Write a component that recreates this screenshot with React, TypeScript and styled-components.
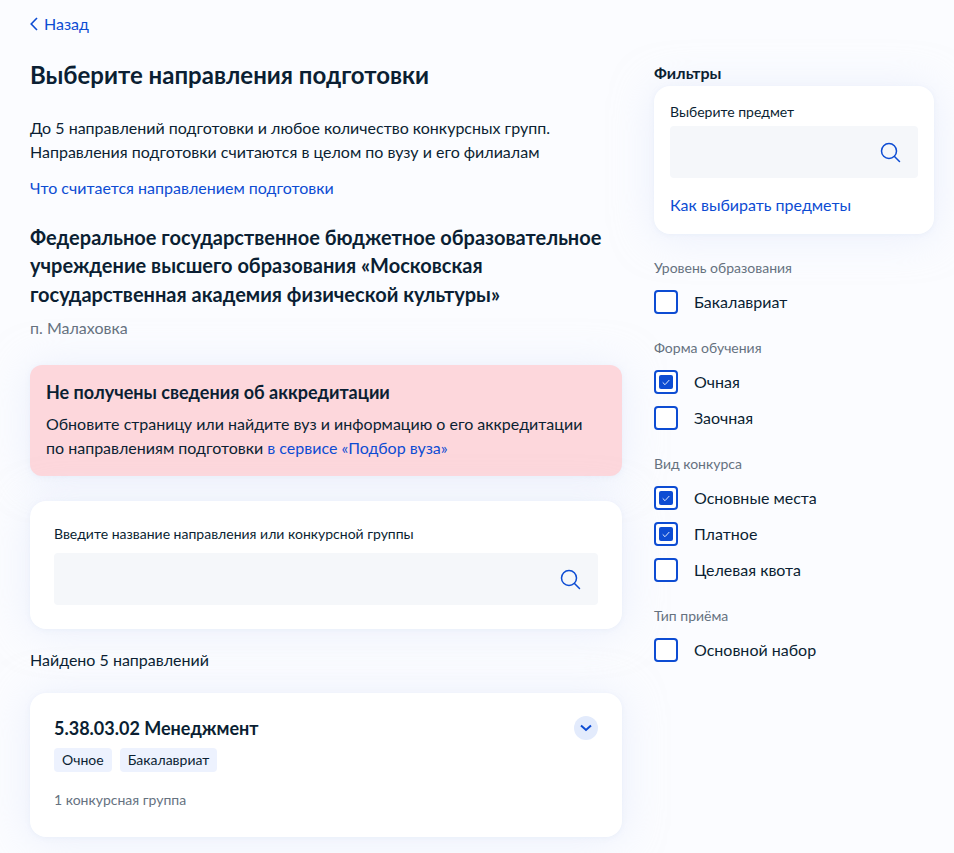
import styled, { createGlobalStyle } from 'styled-components';

const GlobalStyle = createGlobalStyle`
  * { box-sizing: border-box; }
  html, body { margin: 0; padding: 0; }
  body {
    background: #fbfcff;
    font-family: Lato, 'Noto Sans', sans-serif;
    color: #0b1f33;
  }
`;

const SearchIcon = () => (
  <svg width="24" height="24" viewBox="0 0 24 24" fill="none" stroke="#0d4cd3" strokeWidth="1.5">
    <circle cx="11" cy="11" r="7.5" />
    <path d="M16.5 16.5l5 5" strokeLinecap="round" />
  </svg>
);

const filters = [
  { title: 'Уровень образования', items: [{ label: 'Бакалавриат', on: false }] },
  {
    title: 'Форма обучения',
    items: [
      { label: 'Очная', on: true },
      { label: 'Заочная', on: false },
    ],
  },
  {
    title: 'Вид конкурса',
    items: [
      { label: 'Основные места', on: true },
      { label: 'Платное', on: true },
      { label: 'Целевая квота', on: false },
    ],
  },
  { title: 'Тип приёма', items: [{ label: 'Основной набор', on: false }] },
];

const App = () => {
  return (
    <Page>
      <GlobalStyle />
      <BackLink>
        <svg width="8" height="14" viewBox="0 0 8 14" fill="none" stroke="#0d4cd3" strokeWidth="1.6">
          <path d="M7 1L1.2 7L7 13" />
        </svg>
        Назад
      </BackLink>
      <Columns>
        <Main>
          <Title>Выберите направления подготовки</Title>
          <Intro>
            До 5 направлений подготовки и любое количество конкурсных групп.
            <br />
            Направления подготовки считаются в целом по вузу и его филиалам
          </Intro>
          <IntroLink>Что считается направлением подготовки</IntroLink>
          <OrgName>
            Федеральное государственное бюджетное образовательное учреждение высшего образования
            «Московская государственная академия физической культуры»
          </OrgName>
          <City>п. Малаховка</City>
          <Alert>
            <AlertTitle>Не получены сведения об аккредитации</AlertTitle>
            <AlertText>
              Обновите страницу или найдите вуз и информацию о его аккредитации
              <br />
              по направлениям подготовки <InlineLink>в сервисе «Подбор вуза»</InlineLink>
            </AlertText>
          </Alert>
          <SearchCard>
            <FieldLabel>Введите название направления или конкурсной группы</FieldLabel>
            <SearchField $gap={9}>
              <SearchIcon />
            </SearchField>
          </SearchCard>
          <Found>Найдено 5 направлений</Found>
          <ResultCard>
            <ResultHead>
              <ResultTitle>5.38.03.02 Менеджмент</ResultTitle>
              <Expand>
                <svg width="12" height="8" viewBox="0 0 12 8" fill="none" stroke="#0d4cd3" strokeWidth="2">
                  <path d="M1 1.5L6 6L11 1.5" />
                </svg>
              </Expand>
            </ResultHead>
            <Tags>
              <Tag>Очное</Tag>
              <Tag>Бакалавриат</Tag>
            </Tags>
            <ResultNote>1 конкурсная группа</ResultNote>
          </ResultCard>
        </Main>
        <Side>
          <SideTitle>Фильтры</SideTitle>
          <SubjectCard>
            <FieldLabel>Выберите предмет</FieldLabel>
            <SearchField $gap={4}>
              <SearchIcon />
            </SearchField>
            <SubjectLink>Как выбирать предметы</SubjectLink>
          </SubjectCard>
          {filters.map((group) => (
            <FilterGroup key={group.title}>
              <GroupTitle>{group.title}</GroupTitle>
              {group.items.map((item) => (
                <CheckRow key={item.label}>
                  <CheckBox>
                    {item.on && (
                      <CheckFill>
                        <svg width="8" height="7" viewBox="0 0 8 7" fill="none" stroke="#dfe8fb" strokeWidth="1">
                          <path d="M0.7 3.4l2.3 2.3L7.3 1" />
                        </svg>
                      </CheckFill>
                    )}
                  </CheckBox>
                  {item.label}
                </CheckRow>
              ))}
            </FilterGroup>
          ))}
        </Side>
      </Columns>
    </Page>
  );
};

const cardShadow = `
  box-shadow: 0 1px 4px rgba(225, 233, 247, 0.5), 0 2px 40px rgba(222, 230, 250, 0.5);
`;

const Page = styled.div`
  height: 853px;
  overflow: hidden;
  padding: 12px 20px 0 30px;
`;

const BackLink = styled.a`
  display: flex;
  align-items: center;
  gap: 6px;
  height: 24px;
  font-size: 16px;
  line-height: 24px;
  color: #0d4cd3;
`;

const Columns = styled.div`
  display: flex;
  gap: 32px;
  margin-top: 23px;
`;

const Main = styled.div`
  width: 592px;
  flex: none;
`;

const Side = styled.div`
  width: 280px;
  flex: none;
  padding-top: 2px;
`;

const Title = styled.h1`
  margin: 0;
  font-size: 24px;
  line-height: 32px;
  font-weight: 700;
`;

const Intro = styled.p`
  margin: 25px 0 0;
  font-size: 16px;
  line-height: 24px;
`;

const IntroLink = styled.a`
  display: block;
  margin-top: 12px;
  font-size: 16px;
  line-height: 24px;
  color: #0d4cd3;
`;

const OrgName = styled.h2`
  margin: 22.5px 0 0;
  font-size: 20px;
  line-height: 28.5px;
  font-weight: 700;
`;

const City = styled.div`
  margin-top: 7.5px;
  font-size: 16px;
  line-height: 24px;
  color: #66727f;
`;

const Alert = styled.div`
  margin-top: 25px;
  height: 111px;
  padding: 15px 16px;
  background: #fdd7dc;
  border-radius: 12px;
  ${cardShadow}
`;

const AlertTitle = styled.div`
  font-size: 18px;
  line-height: 24px;
  font-weight: 700;
`;

const AlertText = styled.p`
  margin: 8px 0 0;
  font-size: 16px;
  line-height: 24px;
`;

const InlineLink = styled.a`
  color: #0d4cd3;
`;

const SearchCard = styled.div`
  margin-top: 25px;
  height: 128px;
  padding: 23px 24px;
  background: #fff;
  border-radius: 16px;
  ${cardShadow}
`;

const FieldLabel = styled.div`
  font-size: 14px;
  line-height: 20px;
`;

const SearchField = styled.div<{ $gap: number }>`
  display: flex;
  align-items: center;
  justify-content: flex-end;
  height: 52px;
  margin-top: ${(p) => p.$gap}px;
  padding-right: 16px;
  background: #f5f7fa;
  border-radius: 4px;
`;

const Found = styled.div`
  margin-top: 19px;
  font-size: 16px;
  line-height: 24px;
`;

const ResultCard = styled.div`
  margin-top: 21px;
  height: 144px;
  padding: 23px 24px;
  background: #fff;
  border-radius: 16px;
  ${cardShadow}
`;

const ResultHead = styled.div`
  display: flex;
  align-items: center;
  justify-content: space-between;
`;

const ResultTitle = styled.div`
  font-size: 18px;
  line-height: 24px;
  font-weight: 700;
`;

const Expand = styled.div`
  display: flex;
  align-items: center;
  justify-content: center;
  width: 24px;
  height: 24px;
  border-radius: 50%;
  background: #e3ebfc;
`;

const Tags = styled.div`
  display: flex;
  gap: 8px;
  margin-top: 8px;
`;

const Tag = styled.span`
  height: 24px;
  padding: 0 8px;
  background: #edf2fe;
  border-radius: 4px;
  font-size: 14px;
  line-height: 24px;
`;

const ResultNote = styled.div`
  margin-top: 18px;
  font-size: 14px;
  line-height: 20px;
  color: #66727f;
`;

const SideTitle = styled.div`
  font-size: 16px;
  line-height: 24px;
  font-weight: 700;
`;

const SubjectCard = styled.div`
  height: 148px;
  margin-top: 1px;
  padding: 16px;
  background: #fff;
  border-radius: 16px;
  ${cardShadow}
`;

const SubjectLink = styled.a`
  display: block;
  margin-top: 15px;
  font-size: 16px;
  line-height: 24px;
  color: #0d4cd3;
`;

const FilterGroup = styled.div`
  margin-top: 24px;
  &:first-of-type {
    margin-top: 0;
  }
`;

const GroupTitle = styled.div`
  margin-bottom: 12px;
  font-size: 14px;
  line-height: 20px;
  color: #66727f;
`;

const CheckRow = styled.div`
  display: flex;
  align-items: center;
  gap: 16px;
  height: 24px;
  margin-top: 12px;
  font-size: 16px;
  line-height: 24px;
`;

const CheckBox = styled.span`
  display: flex;
  align-items: center;
  justify-content: center;
  width: 24px;
  height: 24px;
  flex: none;
  background: #fff;
  border: 2px solid #0d4cd3;
  border-radius: 4px;
`;

const CheckFill = styled.span`
  display: flex;
  align-items: center;
  justify-content: center;
  width: 14px;
  height: 14px;
  background: #0d4cd3;
  border-radius: 2px;
`;

export default App;
